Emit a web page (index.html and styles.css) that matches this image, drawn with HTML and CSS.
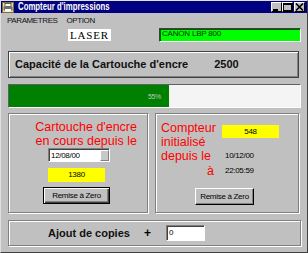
FILE: index.html
```html
<!DOCTYPE html>
<html lang="fr">

<head>
    <meta charset="UTF-8">
    <title>Compteur d'impressions</title>
    <link rel="stylesheet" href="styles.css">
</head>

<body>
    <div class="window">
        <div class="titlebar">
            <svg class="app-icon" width="12" height="11" viewBox="0 0 12 11">
                <rect x="0.5" y="0.5" width="11" height="10" fill="#e8dc98" stroke="#807040" />
                <rect x="3" y="1.5" width="6" height="3" fill="#fff" stroke="#404040" stroke-width="0.8" />
                <rect x="1.5" y="4.5" width="9" height="4" fill="#707070" />
                <rect x="3" y="7" width="6" height="2.5" fill="#fff" />
                <rect x="8.5" y="5.5" width="1" height="1" fill="#20c020" />
            </svg>
            <span class="title">Compteur d'impressions</span>
            <div class="win-buttons">
                <span class="win-btn">
                    <svg width="9" height="8" viewBox="0 0 9 8"><rect x="1" y="6" width="5" height="2" fill="#000" /></svg>
                </span>
                <span class="win-btn">
                    <svg width="9" height="8" viewBox="0 0 9 8"><rect x="0.5" y="0.5" width="8" height="7" fill="none" stroke="#000" /><rect x="0" y="0" width="9" height="2" fill="#000" /></svg>
                </span>
                <span class="win-btn close">
                    <svg width="9" height="8" viewBox="0 0 9 8"><path d="M1 0.5 L8 7.5 M8 0.5 L1 7.5" stroke="#000" stroke-width="1.6" /></svg>
                </span>
            </div>
        </div>

        <div class="menu">
            <span>PARAMETRES</span>
            <span>OPTION</span>
        </div>

        <div class="content">
            <div class="printer-row">
                <div class="printer-type">LASER</div>
                <div class="printer-model">CANON LBP 800</div>
            </div>

            <div class="capacity">
                <span>Capacité de la Cartouche d'encre</span>
                <span class="capacity-value">2500</span>
            </div>

            <div class="progress">
                <div class="progress-fill" style="width: 55%"></div>
                <span class="progress-text">55%</span>
            </div>

            <div class="panels">
                <div class="panel panel-left">
                    <p class="red-text">Cartouche d'encre<br>en cours depuis le</p>
                    <div class="date-field">
                        <span>12/08/00</span>
                        <span class="spin"></span>
                    </div>
                    <div class="yellow-box count-left">1380</div>
                    <button class="btn btn-default">Remise à Zero</button>
                </div>

                <div class="panel panel-right">
                    <div class="counter-grid">
                        <span class="red-label">Compteur</span>
                        <span class="yellow-box count-right">548</span>
                        <span class="red-label">initialisé</span>
                        <span></span>
                        <span class="red-label">depuis le</span>
                        <span class="small">10/12/00</span>
                        <span class="red-label red-a">à</span>
                        <span class="small time">22:05:59</span>
                    </div>
                    <button class="btn btn-right">Remise à Zero</button>
                </div>
            </div>

            <div class="copies">
                <span class="copies-label">Ajout de copies</span>
                <span class="plus">+</span>
                <div class="copies-input">0</div>
            </div>
        </div>
    </div>
</body>

</html>
```

FILE: styles.css
```css
body {
    margin: 0;
    font-family: 'Liberation Sans', Arial, sans-serif;
    background-color: #c0c0c0;
}

.window {
    width: 308px;
    height: 253px;
    box-sizing: border-box;
    background-color: #c0c0c0;
    border: 1px solid;
    border-color: #e0e0e0 #404040 #404040 #e0e0e0;
    overflow: hidden;
}

/* title bar */
.titlebar {
    height: 12px;
    background-color: #000080;
    display: flex;
    align-items: center;
}

.app-icon {
    margin-left: 1px;
    flex-shrink: 0;
}

.title {
    color: #fff;
    font-weight: bold;
    font-size: 10px;
    line-height: 12px;
    margin-left: 4px;
    white-space: nowrap;
    transform: scaleX(0.78);
    transform-origin: left center;
}

.win-buttons {
    margin-left: auto;
    margin-right: 2px;
    display: flex;
}

.win-btn {
    width: 11px;
    height: 10px;
    box-sizing: border-box;
    background-color: #c0c0c0;
    border: 1px solid;
    border-color: #fff #000 #000 #fff;
    display: flex;
    align-items: center;
    justify-content: center;
}

.win-btn.close {
    margin-left: 1px;
}

/* menu */
.menu {
    height: 15px;
    box-sizing: border-box;
    padding: 1px 0 0 6px;
    font-size: 8px;
    line-height: 14px;
    letter-spacing: -0.4px;
    color: #101010;
    display: flex;
    gap: 9px;
}

.content {
    padding-left: 7px;
}

/* printer row */
.printer-row {
    display: flex;
    align-items: flex-start;
    height: 14px;
}

.printer-type {
    margin: 1px 0 0 60px;
    width: 43px;
    height: 12px;
    background-color: #fff;
    font-family: 'Liberation Serif', 'Times New Roman', serif;
    font-size: 11px;
    line-height: 12px;
    letter-spacing: 0.8px;
    text-align: center;
}

.printer-model {
    margin-left: 48px;
    width: 142px;
    height: 14px;
    box-sizing: border-box;
    background-color: #00ff00;
    border: 1px solid;
    border-color: #404040 #fff #fff #404040;
    box-shadow: inset 1px 1px 0 #006000;
    color: #003000;
    font-size: 8px;
    line-height: 9px;
    letter-spacing: -0.2px;
    padding-left: 2px;
}

/* capacity */
.capacity {
    margin-top: 9px;
    width: 291px;
    height: 27px;
    box-sizing: border-box;
    border: 1px solid #404040;
    box-shadow: inset 1px 1px 0 #fff, inset -1px -1px 0 #808080;
    display: flex;
    align-items: center;
    padding-left: 6px;
    font-size: 11px;
    font-weight: bold;
    line-height: 13px;
    color: #111;
}

.capacity-value {
    margin-left: 26px;
}

/* progress */
.progress {
    position: relative;
    margin-top: 6px;
    width: 293px;
    height: 24px;
    box-sizing: border-box;
    background-color: #f4f4f4;
    border: 1px solid;
    border-color: #606060 #fff #fff #606060;
}

.progress-fill {
    height: 100%;
    background-color: #008000;
}

.progress-text {
    position: absolute;
    left: 0;
    right: 0;
    top: 0;
    bottom: 0;
    display: flex;
    align-items: center;
    justify-content: center;
    font-size: 7px;
    letter-spacing: -0.3px;
    color: #b8ccb8;
}

/* panels */
.panels {
    margin-top: 5px;
    display: flex;
    gap: 7px;
}

.panel {
    height: 100px;
    box-sizing: border-box;
    border: 1px solid #808080;
    box-shadow: inset 1px 1px 0 #fff, 1px 1px 0 #fff;
}

.panel-left {
    width: 140px;
    padding-top: 6px;
}

.panel-right {
    width: 144px;
    padding-top: 7px;
}

.red-text {
    margin: 0;
    padding-right: 10px;
    text-align: right;
    color: #ff0000;
    font-size: 12.5px;
    line-height: 14px;
}

.date-field {
    margin-left: 39px;
    width: 62px;
    height: 14px;
    box-sizing: border-box;
    background-color: #fff;
    border: 1px solid;
    border-color: #808080 #fff #fff #808080;
    box-shadow: inset 1px 1px 0 #404040;
    display: flex;
    align-items: center;
    padding-left: 2px;
    font-size: 8px;
    letter-spacing: -0.3px;
}

.spin {
    margin-left: auto;
    width: 9px;
    height: 11px;
    box-sizing: border-box;
    background-color: #c8c8c8;
    border: 1px solid;
    border-color: #fff #808080 #808080 #fff;
}

.yellow-box {
    background-color: #ffff00;
    font-size: 8px;
    letter-spacing: -0.3px;
    text-align: center;
}

.count-left {
    margin: 6px 0 0 39px;
    width: 57px;
    height: 14px;
    line-height: 14px;
}

.btn {
    display: block;
    height: 17px;
    box-sizing: border-box;
    padding: 0;
    background-color: #c0c0c0;
    font-family: 'Liberation Sans', Arial, sans-serif;
    font-size: 8px;
    letter-spacing: -0.3px;
    color: #000;
    border: 1px solid;
    border-color: #fff #000 #000 #fff;
    box-shadow: inset -1px -1px 0 #808080;
}

.btn-default {
    margin: 5px 0 0 34px;
    width: 67px;
    border: 1px solid #000;
    box-shadow: inset 1px 1px 0 #fff, inset -1px -1px 0 #404040, inset -2px -2px 0 #808080;
}

.btn-right {
    margin: 10px 0 0 39px;
    width: 59px;
}

.counter-grid {
    display: grid;
    grid-template-columns: 56px 58px;
    grid-template-rows: 14px 14px 14px 15px;
    column-gap: 5px;
    padding-left: 5px;
}

.red-label {
    color: #ff0000;
    font-size: 12.5px;
    line-height: 14px;
    white-space: nowrap;
}

.red-a {
    align-self: end;
    justify-self: end;
    margin-right: 3px;
}

.count-right {
    margin-top: 4px;
    width: 57px;
    height: 13px;
    line-height: 13px;
}

.small {
    font-size: 8px;
    line-height: 14px;
    letter-spacing: -0.3px;
    padding-left: 3px;
}

.time {
    align-self: end;
}

/* copies */
.copies {
    margin-top: 7px;
    width: 293px;
    height: 26px;
    box-sizing: border-box;
    border: 1px solid #808080;
    box-shadow: inset 1px 1px 0 #fff, 1px 1px 0 #fff;
    display: flex;
    align-items: center;
    padding-left: 39px;
}

.copies-label {
    font-size: 11px;
    font-weight: bold;
    color: #111;
}

.plus {
    margin-left: 14px;
    font-size: 12px;
    font-weight: bold;
}

.copies-input {
    margin-left: 15px;
    width: 39px;
    height: 16px;
    box-sizing: border-box;
    background-color: #fff;
    border: 1px solid;
    border-color: #808080 #fff #fff #808080;
    box-shadow: inset 1px 1px 0 #404040;
    font-size: 8px;
    line-height: 14px;
    padding-left: 2px;
}
```
